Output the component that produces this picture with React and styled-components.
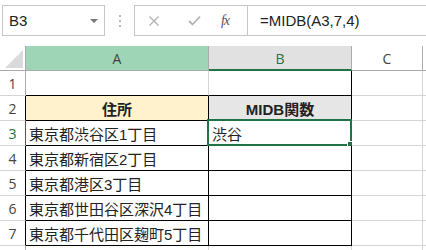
import React from "react";
import styled, { createGlobalStyle } from "styled-components";

const GlobalStyle = createGlobalStyle`
  body {
    margin: 0;
    background: #fff;
    overflow: hidden;
    font-family: "Liberation Sans", "Noto Sans CJK JP", sans-serif;
  }
`;

const rows = [
  "東京都渋谷区1丁目",
  "東京都新宿区2丁目",
  "東京都港区3丁目",
  "東京都世田谷区深沢4丁目",
  "東京都千代田区麹町5丁目"
];

const Sheet = styled.div`
  width: 426px;
  height: 250px;
  overflow: hidden;
`;

const FormulaBar = styled.div`
  height: 46px;
  display: flex;
  align-items: flex-start;
  padding: 5px 0 0 2px;
  box-sizing: border-box;
`;

const NameBox = styled.div`
  width: 103px;
  height: 31px;
  box-sizing: border-box;
  border: 1px solid #c6c6c6;
  display: flex;
  align-items: center;
  justify-content: space-between;
  padding: 0 6px 0 6px;
  font-size: 15px;
  color: #222;
`;

const Caret = styled.span`
  width: 0;
  height: 0;
  border-left: 4px solid transparent;
  border-right: 4px solid transparent;
  border-top: 4px solid #777;
  margin-top: 1px;
`;

const Grip = styled.div`
  width: 29px;
  height: 31px;
  display: flex;
  flex-direction: column;
  align-items: center;
  justify-content: center;
  gap: 3px;
`;

const Dot = styled.span`
  width: 2px;
  height: 2px;
  background: #b8b8b8;
`;

const ButtonBox = styled.div`
  width: 114px;
  height: 31px;
  box-sizing: border-box;
  border: 1px solid #c6c6c6;
  display: flex;
  align-items: center;
  padding-left: 12px;
`;

const IconSlot = styled.span`
  width: 14px;
  margin-left: ${p => p.$gap || 0}px;
  display: flex;
  align-items: center;
  justify-content: center;
`;

const Fx = styled.span`
  font-family: "Liberation Serif", "DejaVu Serif", serif;
  font-style: italic;
  font-size: 14px;
  color: #555;
  letter-spacing: -1px;
`;

const FormulaInput = styled.div`
  flex: 1;
  height: 31px;
  box-sizing: border-box;
  border: 1px solid #c6c6c6;
  border-left: none;
  margin-right: -2px;
  display: flex;
  align-items: center;
  padding-left: 12px;
  font-size: 15px;
  color: #222;
`;

const Grid = styled.div`
  display: grid;
  grid-template-columns: 26px 183px 143px 71px 1fr;
  grid-auto-rows: 25px;
`;

const Corner = styled.div`
  box-sizing: border-box;
  border-right: 1px solid #ababab;
  border-bottom: 1px solid #ababab;
  display: flex;
  align-items: flex-end;
  justify-content: flex-end;
  padding: 0 2px 2px 0;
`;

const ColHeader = styled.div`
  box-sizing: border-box;
  background: ${p => p.$bg || "#fff"};
  border-right: 1px solid #ababab;
  border-bottom: ${p => (p.$active ? "2px solid #217346" : "1px solid #ababab")};
  display: flex;
  align-items: center;
  justify-content: center;
  font-family: "Open Sans", "Liberation Sans", sans-serif;
  font-size: 14px;
  color: ${p => (p.$active ? "#217346" : "#444")};
  padding-top: ${p => (p.$active ? "1px" : "0")};
`;

const RowHeader = styled.div`
  box-sizing: border-box;
  border-right: 1px solid ${p => p.$edge || "#ababab"};
  border-bottom: 1px solid #d4d4d4;
  display: flex;
  align-items: center;
  justify-content: center;
  font-family: "Open Sans", "Liberation Sans", sans-serif;
  font-size: 14px;
  color: ${p => (p.$active ? "#217346" : "#444")};
`;

const Cell = styled.div`
  position: relative;
  box-sizing: border-box;
  background: ${p => p.$fill || "#fff"};
  border-right: 1px solid ${p => p.$right || "#d4d4d4"};
  border-bottom: 1px solid ${p => p.$bottom || "#d4d4d4"};
  display: flex;
  align-items: center;
  justify-content: ${p => (p.$center ? "center" : "flex-start")};
  padding-left: ${p => (p.$center ? "0" : "3px")};
  font-family: "Liberation Sans", "Noto Sans CJK JP", sans-serif;
  font-size: 15px;
  font-weight: ${p => (p.$bold ? 700 : 400)};
  color: #222;
  white-space: nowrap;
`;

const Selection = styled.div`
  position: absolute;
  left: -2px;
  top: -2px;
  right: -1px;
  bottom: -1px;
  border: 2px solid #217346;
  pointer-events: none;
`;

const Handle = styled.div`
  position: absolute;
  right: -4px;
  bottom: -4px;
  width: 5px;
  height: 5px;
  background: #217346;
  border: 1px solid #fff;
`;

function CornerMark() {
  return (
    <svg width="18" height="18" viewBox="0 0 18 18">
      <polygon points="0,18 18,0 18,18" fill="#dadada" />
    </svg>
  );
}

function CancelIcon() {
  return (
    <svg width="12" height="12" viewBox="0 0 12 12">
      <path d="M1.5 1.5 L10.5 10.5 M10.5 1.5 L1.5 10.5" stroke="#b4b4b4" strokeWidth="1.4" fill="none" />
    </svg>
  );
}

function EnterIcon() {
  return (
    <svg width="13" height="11" viewBox="0 0 13 11">
      <path d="M1 6 L4.5 9.5 L12 1.5" stroke="#b4b4b4" strokeWidth="1.8" fill="none" />
    </svg>
  );
}

export default function App() {
  const black = "#000";
  return (
    <Sheet>
      <GlobalStyle />
      <FormulaBar>
        <NameBox>
          B3
          <Caret />
        </NameBox>
        <Grip>
          <Dot />
          <Dot />
          <Dot />
        </Grip>
        <ButtonBox>
          <IconSlot>
            <CancelIcon />
          </IconSlot>
          <IconSlot $gap={26}>
            <EnterIcon />
          </IconSlot>
          <IconSlot $gap={17}>
            <Fx>fx</Fx>
          </IconSlot>
        </ButtonBox>
        <FormulaInput>=MIDB(A3,7,4)</FormulaInput>
      </FormulaBar>

      <Grid>
        <Corner>
          <CornerMark />
        </Corner>
        <ColHeader $bg="#9fd5b7">A</ColHeader>
        <ColHeader $bg="#e1e1e1" $active>B</ColHeader>
        <ColHeader>C</ColHeader>
        <ColHeader />

        <RowHeader>1</RowHeader>
        <Cell $bottom={black} />
        <Cell $bottom={black} $right={black} />
        <Cell />
        <Cell />

        <RowHeader $edge={black}>2</RowHeader>
        <Cell $fill="#fff2cc" $right={black} $bottom={black} $center $bold>
          住所
        </Cell>
        <Cell $fill="#e7e6e6" $right={black} $bottom={black} $center $bold>
          MIDB関数
        </Cell>
        <Cell />
        <Cell />

        {rows.map((addr, i) => (
          <React.Fragment key={i}>
            <RowHeader $edge={i === 0 ? "#217346" : black} $active={i === 0}>
              {i + 3}
            </RowHeader>
            <Cell $right={black} $bottom={black}>
              {addr}
            </Cell>
            <Cell $right={black} $bottom={black}>
              {i === 0 && "渋谷"}
              {i === 0 && (
                <Selection>
                  <Handle />
                </Selection>
              )}
            </Cell>
            <Cell />
            <Cell />
          </React.Fragment>
        ))}

        <RowHeader />
        <Cell />
        <Cell />
        <Cell />
        <Cell />
      </Grid>
    </Sheet>
  );
}
